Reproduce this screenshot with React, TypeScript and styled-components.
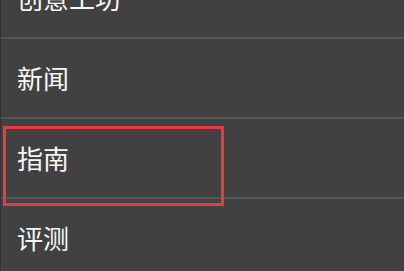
import React from 'react'
import styled, { createGlobalStyle } from "styled-components";

const items = ["创意工坊", "新闻", "指南", "评测"];

export default function App() {
    return (
        <>
            <GlobalStyle />
            <Screen>
                <Menu>
                    {items.map((label) => (
                        <MenuItem key={label}>
                            <Label>{label}</Label>
                            {label === "指南" && <Highlight />}
                        </MenuItem>
                    ))}
                </Menu>
            </Screen>
        </>
    );
}

const GlobalStyle = createGlobalStyle`
    html, body {
        margin:0;
        padding:0;
        background:#414141;
        overflow:hidden;
    }
`;

const Screen = styled.div`
    width:404px;
    height:271px;
    overflow:hidden;
    background:#414141;
    border-left:1px solid #333333;
    box-sizing:border-box;
    font-family:"Noto Sans CJK SC", "Noto Sans", sans-serif;
`;

const Menu = styled.ul`
    list-style:none;
    margin:-41px 0 0;
    padding:0;
`;

const MenuItem = styled.li`
    position:relative;
    height:78px;
    display:flex;
    align-items:center;
    padding-left:16px;
    border-bottom:2px solid #555555;
`;

const Label = styled.span`
    font-size:26px;
    color:#f7f7f7;
    line-height:1;
`;

const Highlight = styled.div`
    position:absolute;
    left:2px;
    top:7px;
    width:221px;
    height:80px;
    border:3px solid #e83a40;
    box-sizing:border-box;
`;
